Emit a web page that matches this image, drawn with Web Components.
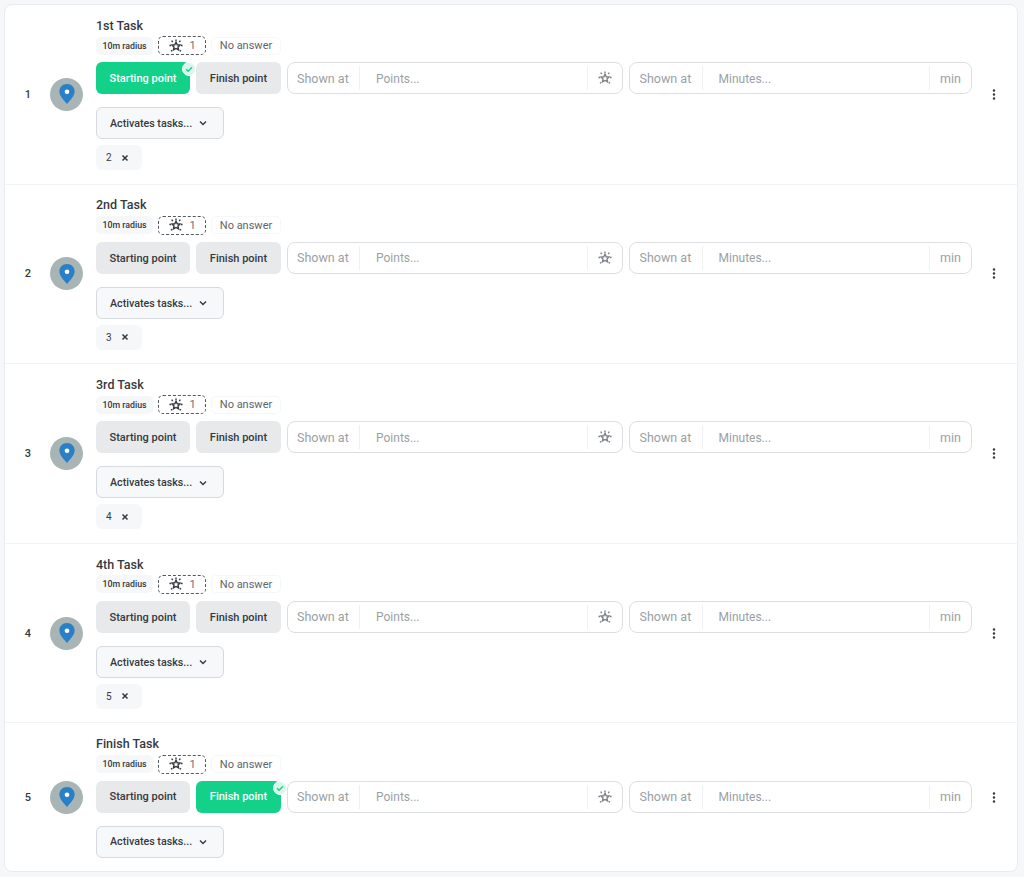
<!doctype html>
<html>
<head>
<meta charset="utf-8">
<title>Tasks</title>
<style>
  html, body { margin: 0; background: #f6f7f9; }
  body { font-family: Roboto, "Liberation Sans", sans-serif; color: #343a40; padding: 4px 6px 5px 4px; }
</style>
</head>
<body>
<task-list>
  <task-row index="1" name="1st Task" start activates="2"></task-row>
  <task-row index="2" name="2nd Task" activates="3"></task-row>
  <task-row index="3" name="3rd Task" activates="4"></task-row>
  <task-row index="4" name="4th Task" activates="5"></task-row>
  <task-row index="5" name="Finish Task" finish></task-row>
</task-list>

<script>
const pointsSvg = `
  <svg viewBox="0 0 16 16" width="14" height="14" fill="none" stroke="currentColor" stroke-width="1.600" aria-hidden="true">
    <path d="M8 3.600l1.400 3 3.200.4-2.300 2.200.6 3.200L8 10.800l-2.900 1.600.6-3.200L3.400 7l3.200-.4z"/>
    <path d="M8 .5v1.800M3 1.800l1.300 1.600M13 1.800l-1.300 1.600M.5 7.500h1.800M13.700 7.500h1.800M2.200 14l1.500-1M13.800 14l-1.500-1"/>
  </svg>`

class TaskList extends HTMLElement {
  constructor () {
    super()
    this.attachShadow({mode: 'open'}).innerHTML = `
      <style>
        :host {
          background: #fff;
          border: 1px solid #e9ebee;
          border-radius: 8px;
          box-sizing: border-box;
          display: block;
          height: 868px;
          overflow: hidden;
        }
        ::slotted(task-row:not(:last-child)) { border-bottom: 1px solid #f2f3f5; }
      </style>
      <slot></slot>
    `
  }
}

class PointButton extends HTMLElement {
  constructor () {
    super()
    this.attachShadow({mode: 'open'}).innerHTML = `
      <style>
        :host {
          align-items: center;
          background: #e8e9eb;
          border-radius: 6px;
          box-sizing: border-box;
          color: #343a40;
          display: flex;
          flex: none;
          font-size: 11px;
          font-weight: 500;
          height: 32px;
          justify-content: center;
          padding-top: .6px;
          position: relative;
        }
        :host([active]) { background: #14d189; color: #fff; }
        svg { display: none; position: absolute; right: -6px; top: 0; }
        :host([active]) svg { display: block; }
      </style>
      <slot></slot>
      <svg viewBox="0 0 14 14" width="14" height="14" aria-hidden="true">
        <circle cx="7" cy="7" r="6.500" fill="#d9f6ea" stroke="#fff"/>
        <path d="M4 7.200l2.100 2 3.900-4" fill="none" stroke="#14d189" stroke-width="1.400"/>
      </svg>
    `
  }
}

class InputGroup extends HTMLElement {
  constructor () {
    super()
    const placeholder = this.getAttribute('placeholder')
    this.attachShadow({mode: 'open'}).innerHTML = `
      <style>
        :host {
          border: 1px solid #dcdee2;
          border-radius: 8px;
          box-sizing: border-box;
          color: #9a9fa5;
          display: flex;
          flex: 1 1 auto;
          font-size: 12.5px;
          height: 32px;
          min-width: 0;
        }
        .cell { align-items: center; display: flex; margin: 3px 0; }
        .label {
          border-right: 1px solid #eff0f2;
          box-sizing: border-box;
          flex: none;
          padding-left: var(--label-pad, 9px);
          width: var(--label-width, 72px);
        }
        .field { flex: 1 1 0; font-size: 12px; min-width: 0; overflow: hidden; padding: 1px 0 0 16px; width: 0; }
        .addon { border-left: 1px solid #eff0f2; flex: none; justify-content: center; }
        ::slotted(*) { display: block; }
      </style>
      <span class="cell label">Shown at</span>
      <span class="cell field">${placeholder}</span>
      <span class="cell addon"><slot></slot></span>
    `
  }
}

class TaskRow extends HTMLElement {
  constructor () {
    super()
    const activates = this.getAttribute('activates')
    this.attachShadow({mode: 'open'}).innerHTML = `
      <style>
        :host {
          align-items: center;
          box-sizing: border-box;
          display: flex;
          height: 179.6px;
        }
        :host(:last-child) { height: 147.6px; }
        .num { box-sizing: border-box; flex: none; font-size: 11px; font-weight: 500; padding-left: 1px; text-align: center; width: 45px; }
        .avatar {
          align-items: center;
          background: #a9b5b5;
          border-radius: 50%;
          display: flex;
          flex: none;
          height: 33px;
          justify-content: center;
          width: 33px;
        }
        .body { display: flex; flex: 1; flex-direction: column; margin: 0 0 .6px 13px; min-width: 0; }
        .title { font-size: 12.5px; font-weight: 500; line-height: 16px; }
        .chips { align-items: center; display: flex; gap: 5px; height: 19px; margin-top: 2.4px; }
        .chip { align-items: center; border-radius: 5px; box-sizing: border-box; display: flex; height: 18px; }
        .radius { background: #f6f7f9; font-size: 8.800px; font-weight: 500; justify-content: center; width: 57px; }
        .score { border: 1px dashed #55595e; gap: 6px; height: 19px; justify-content: center; width: 48px; font-size: 11px; color: #6b7076; padding-left: 1px; }
        .score svg { color: #343a40; }
        .answer { border: 1px solid #f6f7f9; color: #5f646a; font-size: 11px; justify-content: center; width: 70px; }
        .controls { display: flex; gap: 6px; margin-top: 7px; }
        .start { width: 94px; }
        .finish { width: 85px; }
        .minutes { --label-pad: 10px; --label-width: 73px; }
        .min { color: #9a9fa5; width: 41px; }
        .icon { color: #7d8288; width: 34px; }
        .min, .icon { align-items: center; display: flex; justify-content: center; }
        .select {
          align-items: center;
          background: #f7f8fa;
          border: 1px solid #d6d9dd;
          border-radius: 6px;
          box-sizing: border-box;
          display: flex;
          font-size: 10.7px;
          font-weight: 500;
          height: 32px;
          margin-top: 13px;
          padding: .6px 0 0 13px;
          width: 128px;
        }
        .select svg { margin-left: auto; margin-right: 16px; }
        .tag {
          align-items: center;
          background: #f6f7f9;
          border-radius: 6px;
          box-sizing: border-box;
          display: flex;
          font-size: 10px;
          gap: 9px;
          height: 25px;
          margin-top: 6px;
          padding-left: 10px;
          width: 46px;
        }
        .menu { display: flex; flex: none; justify-content: center; margin: 0 13px 0 12px; width: 20px; }
      </style>
      <div class="num">${this.getAttribute('index')}</div>
      <div class="avatar">
        <svg viewBox="0 0 20 24" width="18" height="22" aria-hidden="true">
          <path d="M10 1C5 1 1.500 4.700 1.500 9.300c0 5.300 5.600 10.400 8.500 13.700 2.900-3.300 8.500-8.400 8.500-13.700C18.500 4.700 15 1 10 1z" fill="#2a80c6"/>
          <circle cx="10" cy="9.500" r="2.600" fill="#fff"/>
        </svg>
      </div>
      <div class="body">
        <div class="title">${this.getAttribute('name')}</div>
        <div class="chips">
          <span class="chip radius">10m radius</span>
          <span class="chip score">${pointsSvg}<span>1</span></span>
          <span class="chip answer">No answer</span>
        </div>
        <div class="controls">
          <point-button class="start" ${this.hasAttribute('start') ? 'active' : ''}>Starting point</point-button>
          <point-button class="finish" ${this.hasAttribute('finish') ? 'active' : ''}>Finish point</point-button>
          <input-group placeholder="Points..."><span class="icon">${pointsSvg}</span></input-group>
          <input-group class="minutes" placeholder="Minutes..."><span class="min">min</span></input-group>
        </div>
        <div class="select">
          <span>Activates tasks...</span>
          <svg viewBox="0 0 8 8" width="8" height="8" fill="none" stroke="#343a40" stroke-width="1.400" aria-hidden="true"><path d="M1 2.500l3 3 3-3"/></svg>
        </div>
        ${activates ? `<div class="tag"><span>${activates}</span>
          <svg viewBox="0 0 8 8" width="8" height="8" stroke="#343a40" stroke-width="1.500" aria-hidden="true"><path d="M1.500 1.500l5 5M6.500 1.500l-5 5"/></svg></div>` : ''}
      </div>
      <div class="menu">
        <svg viewBox="0 0 4 11" width="4" height="11" fill="#343a40" aria-hidden="true"><circle cx="2" cy="1.500" r="1.200"/><circle cx="2" cy="5.500" r="1.200"/><circle cx="2" cy="9.500" r="1.200"/></svg>
      </div>
    `
  }
}

window.customElements.define('task-list', TaskList)
window.customElements.define('point-button', PointButton)
window.customElements.define('input-group', InputGroup)
window.customElements.define('task-row', TaskRow)
</script>
</body>
</html>
